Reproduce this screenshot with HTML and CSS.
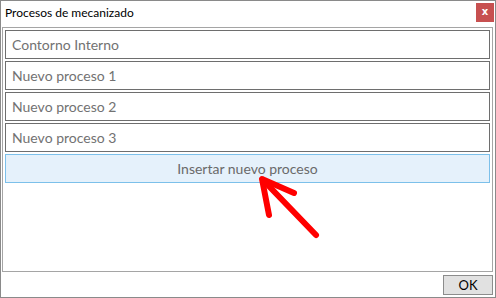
FILE: index.html
```html
<!DOCTYPE html>
<html>
<head>
<meta charset="utf-8">
<link rel="stylesheet" href="styles.css">
</head>
<body>
<div class="window">
  <div class="titlebar">
    <span class="title">Procesos de mecanizado</span>
    <span class="close">x</span>
  </div>
  <div class="panel">
    <div class="row">Contorno Interno</div>
    <div class="row">Nuevo proceso 1</div>
    <div class="row">Nuevo proceso 2</div>
    <div class="row">Nuevo proceso 3</div>
    <div class="insert">Insertar nuevo proceso</div>
  </div>
  <div class="footer">
    <button class="ok">OK</button>
  </div>
  <svg class="arrow" width="496" height="298" viewBox="0 0 496 298">
    <polyline points="294,193 262,179 269,215" fill="none" stroke="#ff0000" stroke-width="6" stroke-linecap="round" stroke-linejoin="round"/>
    <line x1="263" y1="180" x2="316" y2="235" stroke="#ff0000" stroke-width="6" stroke-linecap="round"/>
  </svg>
</div>
</body>
</html>
```

FILE: styles.css
```css
html, body {
  margin: 0;
  padding: 0;
  background: #ffffff;
}
.window {
  position: relative;
  width: 496px;
  height: 298px;
  box-sizing: border-box;
  border: 1px solid #8a8a8a;
  background: #ffffff;
  display: flex;
  flex-direction: column;
  font-family: "Lato", "Open Sans", sans-serif;
}
.titlebar {
  height: 26px;
  display: flex;
  align-items: flex-start;
  justify-content: space-between;
  padding-left: 4px;
  padding-right: 1px;
}
.title {
  font-size: 12px;
  color: #000000;
  margin-top: 4px;
}
.close {
  width: 18px;
  height: 19px;
  margin-top: 2px;
  background: #c75050;
  color: #ffffff;
  font-family: "DejaVu Sans", sans-serif;
  font-weight: bold;
  font-size: 10px;
  line-height: 17px;
  text-align: center;
}
.panel {
  margin-left: 1px;
  width: 491px;
  height: 245px;
  box-sizing: border-box;
  border: 1px solid #a5a5a5;
  padding: 2px 2px 0 2px;
  display: flex;
  flex-direction: column;
  gap: 2px;
}
.row {
  height: 29px;
  box-sizing: border-box;
  border: 1px solid #6e6e6e;
  padding-left: 6px;
  font-size: 14px;
  line-height: 27px;
  color: #727272;
}
.insert {
  height: 29px;
  box-sizing: border-box;
  border: 1px solid #7cc0ea;
  background: #e5f1fb;
  text-align: center;
  font-size: 14px;
  line-height: 27px;
  color: #6a6a6a;
}
.footer {
  flex: 1;
  display: flex;
  justify-content: flex-end;
  align-items: flex-start;
  padding-top: 3px;
  padding-right: 2px;
}
.ok {
  width: 50px;
  height: 20px;
  box-sizing: border-box;
  border: 1px solid #8c8c8c;
  background: #e1e1e1;
  font-family: "Lato", "Open Sans", sans-serif;
  font-size: 13px;
  color: #000000;
  padding: 0;
  line-height: 17px;
}
.arrow {
  position: absolute;
  left: -1px;
  top: -1px;
  pointer-events: none;
}
```
